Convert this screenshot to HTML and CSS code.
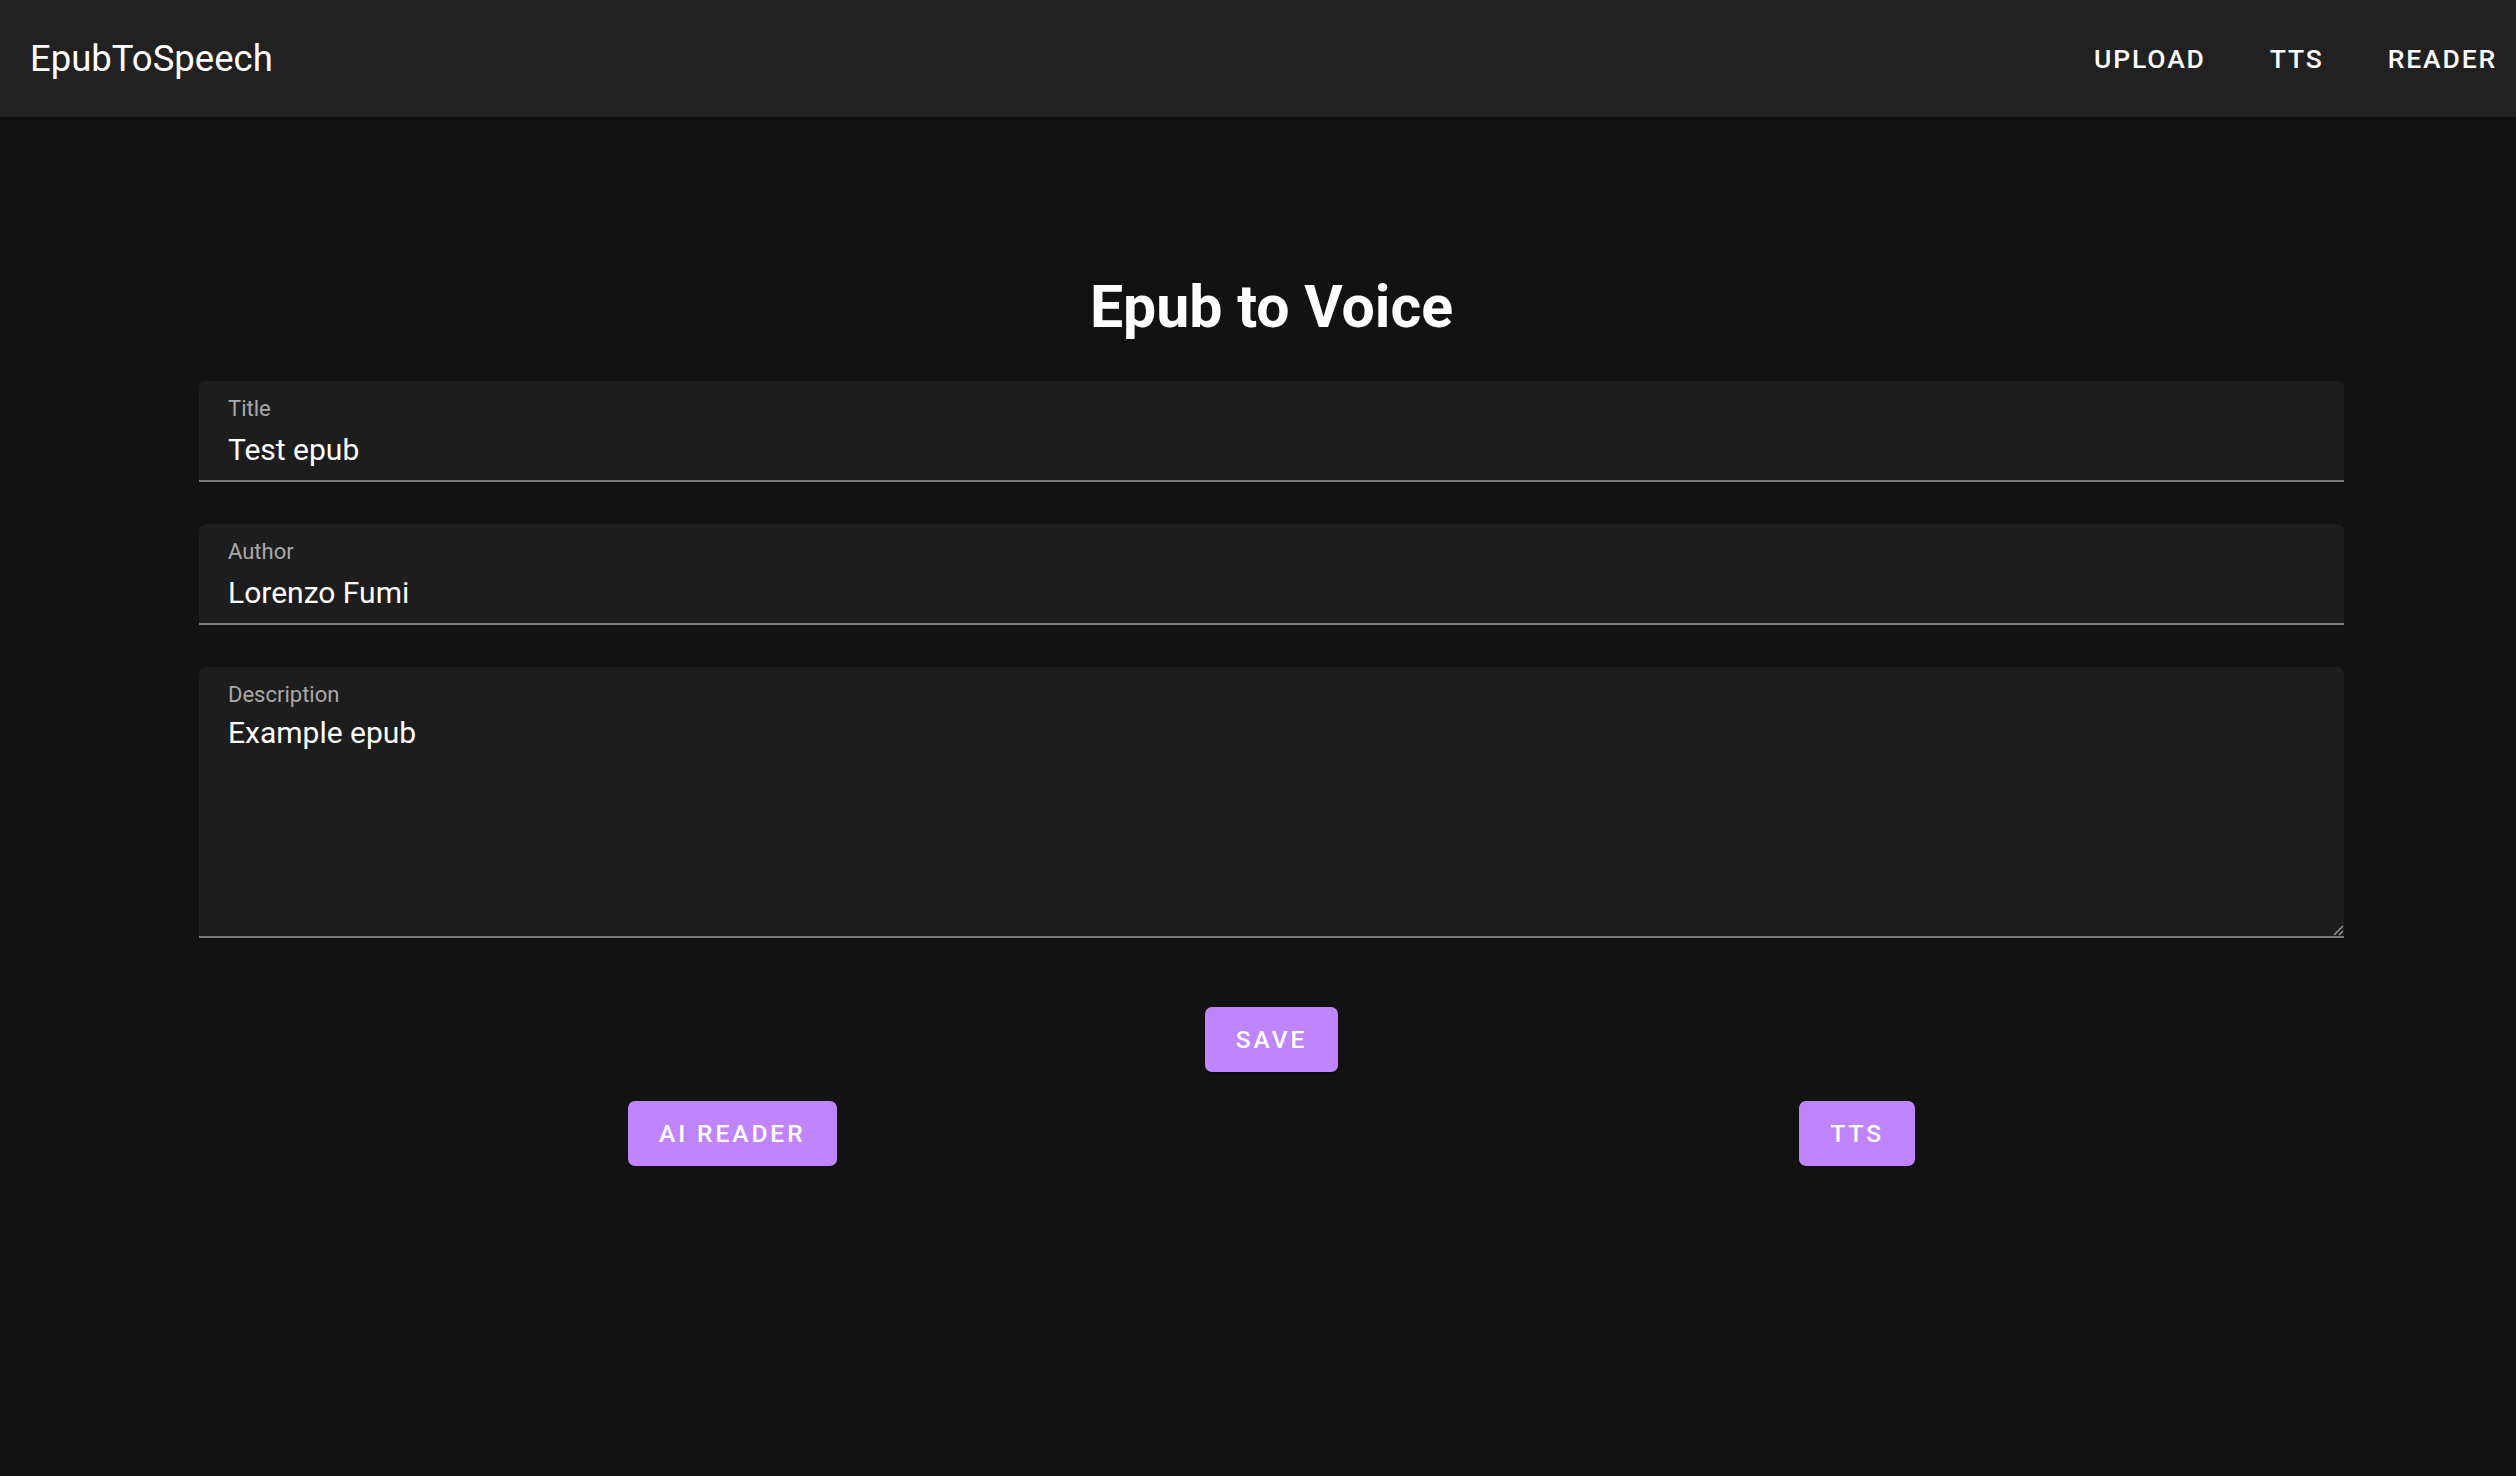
FILE: index.html
```html
<!DOCTYPE html>
<html lang="en">
<head>
<meta charset="utf-8">
<title>EpubToSpeech</title>
<link rel="stylesheet" href="styles.css">
</head>
<body>
<header class="appbar">
  <div class="brand">EpubToSpeech</div>
  <nav class="nav">
    <a class="nav-link" href="#">Upload</a>
    <a class="nav-link" href="#">TTS</a>
    <a class="nav-link" href="#">Reader</a>
  </nav>
</header>
<main class="page">
  <h1 class="heading">Epub to Voice</h1>
  <form class="form">
    <div class="field">
      <div class="field-label">Title</div>
      <div class="field-value">Test epub</div>
    </div>
    <div class="field">
      <div class="field-label">Author</div>
      <div class="field-value">Lorenzo Fumi</div>
    </div>
    <div class="field field-multiline">
      <div class="field-label">Description</div>
      <div class="field-value">Example epub</div>
      <svg class="grip" width="12" height="12" viewBox="0 0 12 12" aria-hidden="true">
        <line x1="2" y1="11" x2="11" y2="2" stroke="#9a9a9a" stroke-width="1.5"/>
        <line x1="7" y1="11" x2="11" y2="7" stroke="#9a9a9a" stroke-width="1.5"/>
      </svg>
    </div>
    <div class="save-row">
      <button type="button" class="btn">Save</button>
    </div>
    <div class="action-row">
      <button type="button" class="btn">AI Reader</button>
      <button type="button" class="btn">TTS</button>
    </div>
  </form>
</main>
</body>
</html>
```
FILE: styles.css
```css
* { box-sizing: border-box; }

html, body {
  margin: 0;
  padding: 0;
  background: #121212;
  color: #fff;
  font-family: Roboto, "Liberation Sans", Arial, sans-serif;
}

.appbar {
  height: 117px;
  background: #212121;
  display: flex;
  align-items: center;
  justify-content: space-between;
  padding: 0 19px 0 30px;
  box-shadow: 0 2px 4px rgba(0,0,0,0.35);
  position: relative;
}

.brand {
  font-size: 36.5px;
  font-weight: 400;
  letter-spacing: 0;
}

.nav {
  display: flex;
  align-items: center;
  gap: 64px;
}

.nav-link {
  color: #fff;
  text-decoration: none;
  text-transform: uppercase;
  font-size: 26.5px;
  font-weight: 500;
  letter-spacing: 0.07em;
}

.page {
  padding: 156px 172px 0 199px;
}

.heading {
  margin: 0 0 40px;
  text-align: center;
  font-size: 59px;
  line-height: 68px;
  font-weight: 700;
}

.form {
  display: flex;
  flex-direction: column;
}

.field {
  position: relative;
  background: #1d1d1d;
  border-radius: 7px 7px 0 0;
  border-bottom: 2px solid #7b7b7b;
  height: 101px;
  padding: 17px 29px 0;
  margin-bottom: 42px;
}

.field-multiline {
  height: 271px;
  margin-bottom: 69px;
}

.field-label {
  font-size: 22px;
  line-height: 22px;
  color: #a9a9a9;
}

.field-value {
  margin-top: 15px;
  font-size: 30px;
  line-height: 30px;
  color: #fff;
}

.field-multiline .field-value {
  margin-top: 12px;
}

.grip {
  position: absolute;
  right: 0;
  bottom: 0;
}

.save-row {
  display: flex;
  justify-content: center;
  margin-bottom: 29px;
}

.action-row {
  display: flex;
  justify-content: space-between;
  padding: 0 429px;
}

.btn {
  height: 65px;
  padding: 0 31px;
  border: none;
  border-radius: 7px;
  background: #c084fc;
  color: #fff;
  font-family: Roboto, "Liberation Sans", Arial, sans-serif;
  font-size: 24.5px;
  font-weight: 500;
  letter-spacing: 0.12em;
  text-transform: uppercase;
  box-shadow: 0 3px 2px -2px rgba(0,0,0,0.3), 0 2px 3px rgba(0,0,0,0.2);
  cursor: pointer;
}
```
